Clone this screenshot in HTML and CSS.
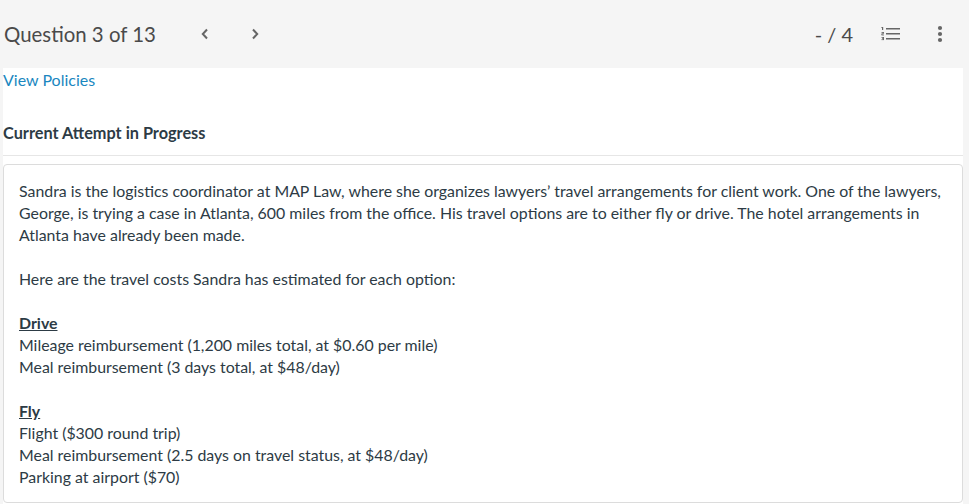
FILE: index.html
```html
<!DOCTYPE html>
<html lang="en">
<head>
<meta charset="utf-8">
<title>Question 3 of 13</title>
<link rel="stylesheet" href="styles.css">
</head>
<body>
<header class="topbar">
  <div class="qnav">
    <span class="qtitle">Question 3 of 13</span>
    <button class="navbtn" aria-label="Previous">
      <svg width="10" height="12" viewBox="0 0 10 12"><path d="M7 1.5 L2.8 6 L7 10.5" fill="none" stroke="#666" stroke-width="2"/></svg>
    </button>
    <button class="navbtn" aria-label="Next">
      <svg width="10" height="12" viewBox="0 0 10 12"><path d="M3 1.5 L7.2 6 L3 10.5" fill="none" stroke="#666" stroke-width="2"/></svg>
    </button>
  </div>
  <div class="tools">
    <span class="score">- / 4</span>
    <span class="icon" aria-label="Question list">
      <svg width="20" height="16" viewBox="0 0 20 16">
        <g fill="#666">
          <rect x="5" y="2" width="14" height="1.5"/>
          <rect x="5" y="7" width="14" height="1.5"/>
          <rect x="5" y="12" width="14" height="1.5"/>
          <rect x="1" y="1" width="1.2" height="3"/>
          <rect x="0.3" y="1" width="1.5" height="0.8"/>
          <rect x="0.5" y="6" width="2.5" height="0.8"/>
          <rect x="1.8" y="6" width="0.9" height="1.6"/>
          <rect x="0.5" y="7.4" width="2.3" height="0.7"/>
          <rect x="0.5" y="8" width="0.9" height="1"/>
          <rect x="0.5" y="8.6" width="2.5" height="0.8"/>
          <rect x="0.5" y="11" width="2.5" height="0.8"/>
          <rect x="2.1" y="11" width="0.9" height="3"/>
          <rect x="1" y="12.2" width="2" height="0.7"/>
          <rect x="0.5" y="13.3" width="2.5" height="0.8"/>
        </g>
      </svg>
    </span>
    <span class="icon kebab" aria-label="More">
      <svg width="6" height="18" viewBox="0 0 6 18"><g fill="#666"><circle cx="3" cy="3" r="2.1"/><circle cx="3" cy="9" r="2.1"/><circle cx="3" cy="15" r="2.1"/></g></svg>
    </span>
  </div>
</header>
<main class="content">
  <a class="policies" href="#">View Policies</a>
  <h2 class="attempt">Current Attempt in Progress</h2>
  <section class="qbox">
    <p>Sandra is the logistics coordinator at MAP Law, where she organizes lawyers’ travel arrangements for client work. One of the lawyers, George, is trying a case in Atlanta, 600 miles from the office. His travel options are to either fly or drive. The hotel arrangements in Atlanta have already been made.</p>
    <p>Here are the travel costs Sandra has estimated for each option:</p>
    <p><strong class="opt">Drive</strong><br>Mileage reimbursement (1,200 miles total, at $0.60 per mile)<br>Meal reimbursement (3 days total, at $48/day)</p>
    <p><strong class="opt">Fly</strong><br>Flight ($300 round trip)<br>Meal reimbursement (2.5 days on travel status, at $48/day)<br>Parking at airport ($70)</p>
  </section>
</main>
</body>
</html>
```
FILE: styles.css
```css
html, body {
  margin: 0;
  padding: 0;
  background: #f5f5f5;
  font-family: Lato, "Open Sans", sans-serif;
  color: #2d3b45;
}
.topbar {
  height: 68px;
  display: flex;
  align-items: center;
  justify-content: space-between;
  padding: 0 0 0 4px;
  background: #f5f5f5;
}
.qnav {
  display: flex;
  align-items: center;
}
.qtitle {
  font-size: 20.4px;
  color: #4a4a4a;
  margin-right: 24px;
}
.navbtn {
  background: none;
  border: 0;
  padding: 0;
  width: 50px;
  height: 24px;
  display: flex;
  align-items: center;
  justify-content: center;
}
.tools {
  display: flex;
  align-items: center;
  margin-right: 26px;
}
.score {
  font-size: 20px;
  color: #4a4a4a;
  margin-right: 28px;
}
.icon {
  display: flex;
  align-items: center;
}
.kebab {
  margin-left: 36px;
}
.content {
  background: #fff;
  margin: 0 6px 0 3px;
  padding: 0 0 4px;
  min-height: 436px;
}
.policies {
  display: block;
  color: #1a87c0;
  text-decoration: none;
  font-size: 16px;
  line-height: 22px;
  padding-top: 1px;
}
.attempt {
  margin: 31px 0 0;
  font-size: 16.3px;
  font-weight: 700;
  line-height: 22px;
  padding-bottom: 11px;
  border-bottom: 1px solid #e6e6e6;
  color: #2d3b45;
}
.qbox {
  margin-top: 8px;
  border: 1px solid #dcdcdc;
  border-radius: 4px;
  padding: 4px 14px 3px 15px;
  font-size: 15.88px;
  line-height: 22px;
  color: #2d3b45;
}
.qbox p {
  margin: 11px 0 22px;
}
.qbox p:last-child {
  margin-bottom: 11px;
}
.opt {
  font-weight: 700;
  text-decoration: underline;
}
```
